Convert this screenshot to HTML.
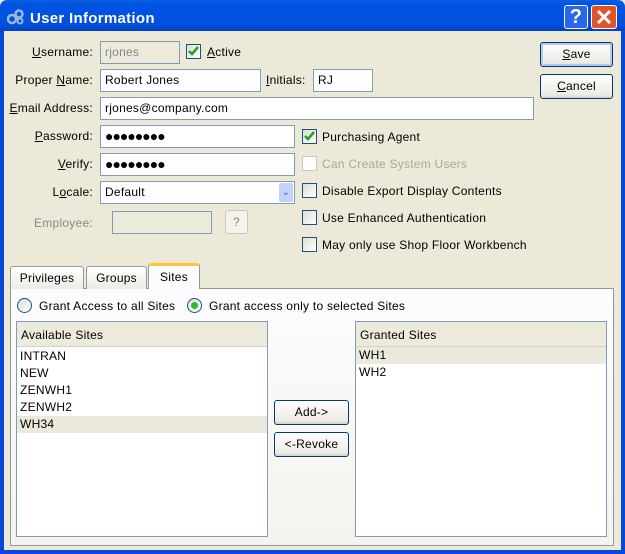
<!DOCTYPE html><html><head><style>
*{box-sizing:border-box;margin:0;padding:0}
body{width:625px;height:554px;overflow:hidden;font-family:"Liberation Sans",sans-serif;font-size:12px;letter-spacing:0.25px;color:#000;background:#ece9d8;position:relative}
.a{position:absolute}
.tb{left:0;top:0;width:625px;height:31px;background:linear-gradient(#0a5fe0,#0054e3 15%,#0050dd 80%,#0041c0);border-radius:7px 7px 0 0}
.fr{background:#0848d8}
.lbl{position:absolute;text-align:right;white-space:nowrap}
.in{position:absolute;background:#fff;border:1px solid #7f9db9;height:23px;padding:3px 4px;white-space:nowrap}
.cb{position:absolute;width:15px;height:15px;border:1px solid #1c5180;background:linear-gradient(135deg,#dcdcd6,#fff)}
.btn{position:absolute;border:1px solid #003c74;border-radius:3px;background:linear-gradient(#fff,#ecebe6 85%,#d6d0c5);text-align:center;line-height:22px}
.t{position:absolute;white-space:nowrap}
.tab{position:absolute;border:1px solid #919b9c;border-bottom:none;border-radius:3px 3px 0 0;background:linear-gradient(#fff,#ecebe6);text-align:center;line-height:22px}
.list{position:absolute;background:#fff;border:1px solid #7f9db9}
.hd{height:25px;background:#ebeadb;border-bottom:1px solid #d6d2c2;padding:6px 4px;position:relative}
.row{height:17px;padding:1px 3px;line-height:15px}
.sel{background:#ebe9dc}
.rad{position:absolute;width:15px;height:15px;border-radius:50%;border:1px solid #1c5180;background:linear-gradient(135deg,#dcdcd6,#fff)}
u{text-decoration:underline}
</style></head><body>
<div class="a tb"></div>
<div class="a fr" style="left:0;top:30px;width:4px;height:524px"></div>
<div class="a fr" style="left:621px;top:30px;width:4px;height:524px"></div>
<div class="a fr" style="left:0;top:550px;width:625px;height:4px"></div>
<svg class="a" style="left:7px;top:9px" width="18" height="16"><circle cx="5" cy="10" r="4" fill="none" stroke="#9cb8e0" stroke-width="2.5"/><circle cx="12" cy="5" r="3.5" fill="none" stroke="#9cb8e0" stroke-width="2.5"/><circle cx="13" cy="12" r="2.5" fill="none" stroke="#9cb8e0" stroke-width="2"/></svg>
<div class="t" style="left:30px;top:10px;color:#fff;font-weight:bold;font-size:15px;letter-spacing:0.3px">User Information</div>
<div class="a" style="left:564px;top:5px;width:24px;height:24px;border:1px solid #fff;border-radius:3px;background:#2a66e8;color:#fff;font-weight:bold;font-size:20px;text-align:center;line-height:22px">?</div>
<div class="a" style="left:591px;top:5px;width:26px;height:24px;border:1px solid #fff;border-radius:3px;background:#e0542a"><svg width="24" height="22"><path d="M6 5L18 17M18 5L6 17" stroke="#fff" stroke-width="3"/></svg></div>

<div class="lbl" style="right:532px;top:45px"><u>U</u>sername:</div>
<div class="in" style="left:100px;top:41px;width:80px;background:#ebeadb;color:#888">rjones</div>
<div class="cb" style="left:186px;top:44px"><svg width="13" height="13"><path d="M2 6l3 3 6-7" stroke="#21a121" stroke-width="2.5" fill="none"/></svg></div>
<div class="t" style="left:207px;top:45px"><u>A</u>ctive</div>
<div class="lbl" style="right:532px;top:73px">Proper <u>N</u>ame:</div>
<div class="in" style="left:100px;top:69px;width:161px">Robert Jones</div>
<div class="t" style="left:266px;top:73px"><u>I</u>nitials:</div>
<div class="in" style="left:313px;top:69px;width:60px">RJ</div>
<div class="lbl" style="right:532px;top:101px"><u>E</u>mail Address:</div>
<div class="in" style="left:100px;top:97px;width:434px">rjones@company.com</div>
<div class="lbl" style="right:532px;top:129px"><u>P</u>assword:</div>
<div class="in" style="left:100px;top:125px;width:195px;font-size:14px;padding-top:2px;letter-spacing:-1px">●●●●●●●●</div>
<div class="lbl" style="right:532px;top:157px"><u>V</u>erify:</div>
<div class="in" style="left:100px;top:153px;width:195px;font-size:14px;padding-top:2px;letter-spacing:-1px">●●●●●●●●</div>
<div class="lbl" style="right:532px;top:185px">L<u>o</u>cale:</div>
<div class="in" style="left:100px;top:181px;width:195px">Default</div>
<div class="a" style="left:279px;top:183px;width:14px;height:19px;background:#c1d3fb;border-radius:2px;color:#4d6185;text-align:center;font-size:10px;line-height:19px">⌄</div>
<div class="lbl" style="right:532px;top:216px;color:#888">Employee:</div>
<div class="in" style="left:112px;top:211px;width:100px;background:#ebeadb"></div>
<div class="a" style="left:225px;top:210px;width:23px;height:24px;border:1px solid #cac8bb;border-radius:3px;background:#f4f3ee;color:#888;text-align:center;line-height:22px">?</div>

<div class="cb" style="left:302px;top:129px"><svg width="13" height="13"><path d="M2 6l3 3 6-7" stroke="#21a121" stroke-width="2.5" fill="none"/></svg></div>
<div class="t" style="left:322px;top:130px">Purchasing Agent</div>
<div class="cb" style="left:302px;top:156px;border-color:#cac8bb;background:#fff"></div>
<div class="t" style="left:322px;top:157px;color:#aca899">Can Create System Users</div>
<div class="cb" style="left:302px;top:183px"></div>
<div class="t" style="left:322px;top:184px">Disable Export Display Contents</div>
<div class="cb" style="left:302px;top:210px"></div>
<div class="t" style="left:322px;top:211px">Use Enhanced Authentication</div>
<div class="cb" style="left:302px;top:237px"></div>
<div class="t" style="left:322px;top:238px">May only use Shop Floor Workbench</div>

<div class="btn" style="left:540px;top:42px;width:73px;height:25px;box-shadow:inset 0 0 0 2px #b4c8f0"><u>S</u>ave</div>
<div class="btn" style="left:540px;top:74px;width:73px;height:25px"><u>C</u>ancel</div>

<div class="a" style="left:10px;top:288px;width:604px;height:258px;border:1px solid #919b9c;background:linear-gradient(#fcfcfe,#f4f3ee)"></div>
<div class="tab" style="left:10px;top:266px;width:74px;height:23px">Privileges</div>
<div class="tab" style="left:86px;top:266px;width:61px;height:23px">Groups</div>
<div class="tab" style="left:148px;top:263px;width:52px;height:26px;background:#fcfcfe;border-top:3px solid #ffc83c;line-height:22px">Sites</div>
<div class="rad" style="left:17px;top:298px"></div>
<div class="t" style="left:39px;top:299px">Grant Access to all Sites</div>
<div class="rad" style="left:187px;top:298px"><div style="position:absolute;left:3px;top:3px;width:7px;height:7px;border-radius:50%;background:#2db82d"></div></div>
<div class="t" style="left:209px;top:299px">Grant access only to selected Sites</div>

<div class="list" style="left:16px;top:321px;width:252px;height:216px">
<div class="hd">Available Sites</div>
<div style="padding-top:1px"><div class="row">INTRAN</div><div class="row">NEW</div><div class="row">ZENWH1</div><div class="row">ZENWH2</div><div class="row sel">WH34</div></div></div>
<div class="list" style="left:355px;top:321px;width:252px;height:216px">
<div class="hd">Granted Sites</div>
<div><div class="row sel">WH1</div><div class="row">WH2</div></div></div>
<div class="btn" style="left:274px;top:400px;width:75px;height:25px">Add-&gt;</div>
<div class="btn" style="left:274px;top:432px;width:75px;height:25px">&lt;-Revoke</div>
</body></html>
